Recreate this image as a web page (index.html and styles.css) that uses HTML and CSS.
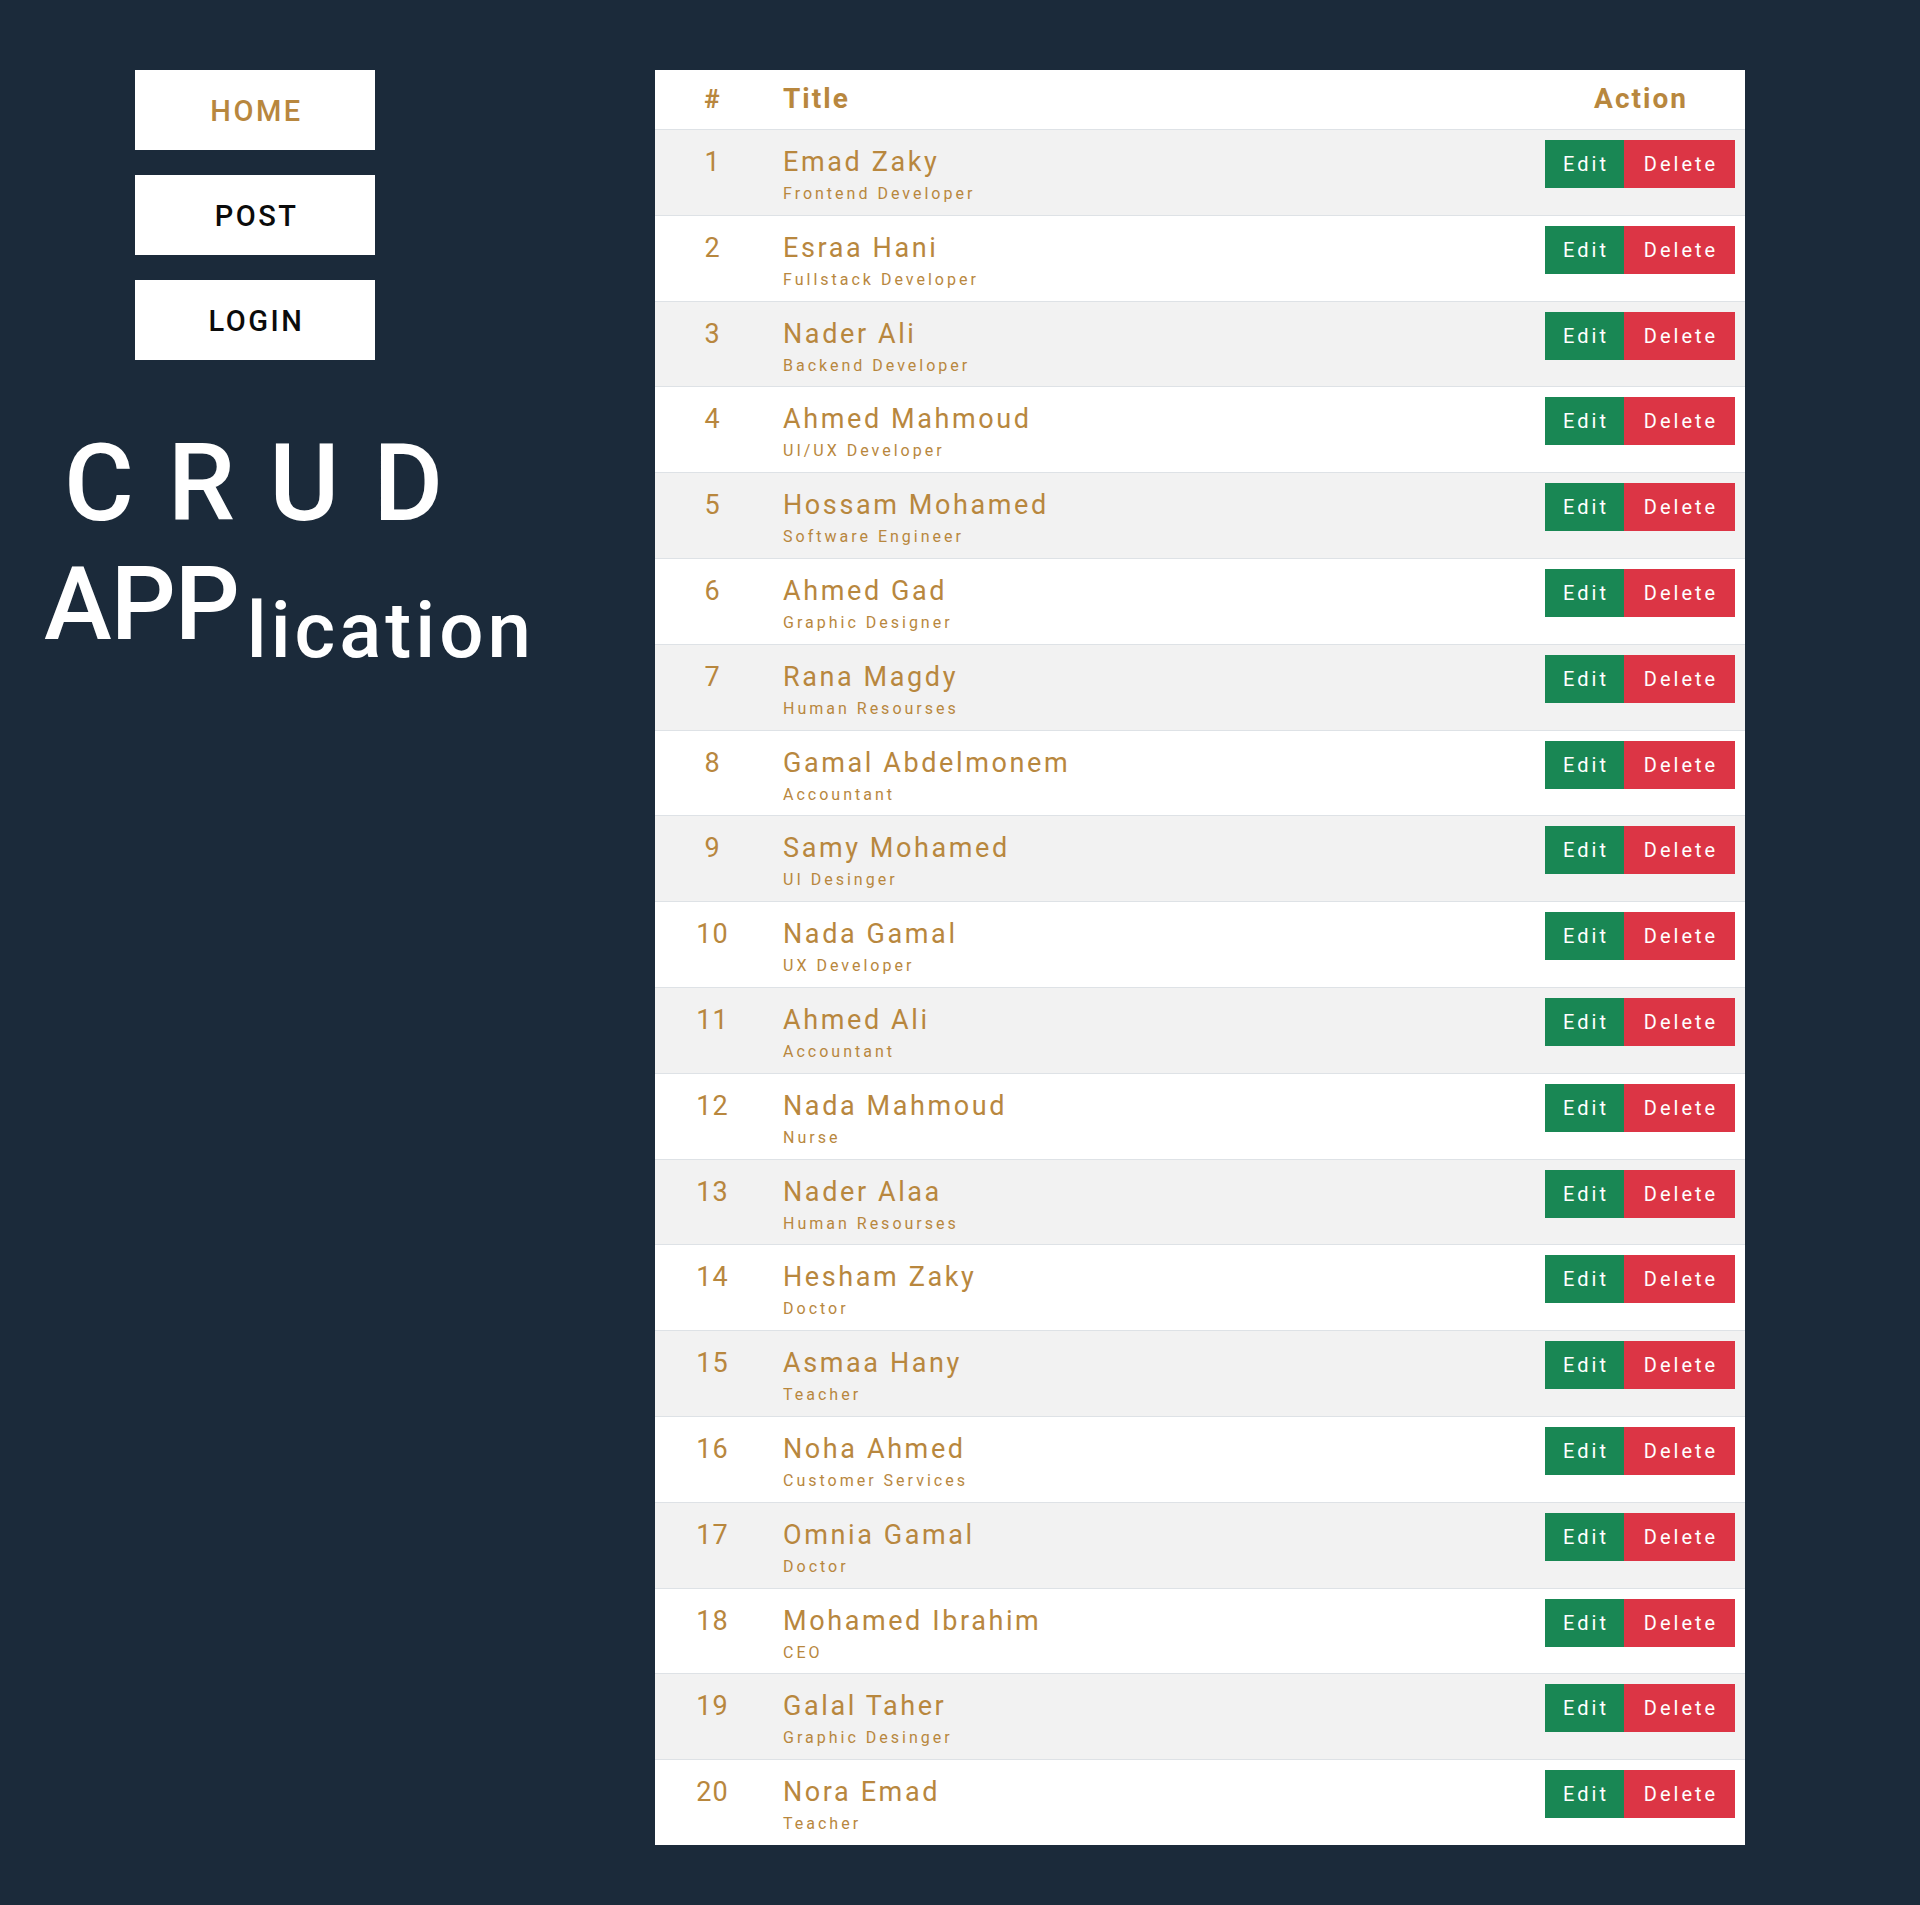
FILE: index.html
```html
<!DOCTYPE html>
<html lang="en">
<head>
<meta charset="utf-8">
<title>CRUD Application</title>
<link rel="stylesheet" href="styles.css">
</head>
<body>
<div class="page">
  <aside class="side">
    <nav class="nav">
      <a class="nav-btn active" href="#">HOME</a>
      <a class="nav-btn" href="#">POST</a>
      <a class="nav-btn" href="#">LOGIN</a>
    </nav>
    <h1 class="brand">
      <span class="brand-crud">CRUD</span>
      <span class="brand-app">APP<span class="brand-sub">lication</span></span>
    </h1>
  </aside>
  <main class="table">
    <div class="row head">
      <div class="c-num">#</div>
      <div class="c-title">Title</div>
      <div class="c-act">Action</div>
    </div>
    <div class="row odd"><div class="c-num">1</div><div class="c-title"><div class="name">Emad Zaky</div><div class="job">Frontend Developer</div></div><div class="c-act"><span class="btn edit">Edit</span><span class="btn del">Delete</span></div></div>
    <div class="row"><div class="c-num">2</div><div class="c-title"><div class="name">Esraa Hani</div><div class="job">Fullstack Developer</div></div><div class="c-act"><span class="btn edit">Edit</span><span class="btn del">Delete</span></div></div>
    <div class="row odd"><div class="c-num">3</div><div class="c-title"><div class="name">Nader Ali</div><div class="job">Backend Developer</div></div><div class="c-act"><span class="btn edit">Edit</span><span class="btn del">Delete</span></div></div>
    <div class="row"><div class="c-num">4</div><div class="c-title"><div class="name">Ahmed Mahmoud</div><div class="job">UI/UX Developer</div></div><div class="c-act"><span class="btn edit">Edit</span><span class="btn del">Delete</span></div></div>
    <div class="row odd"><div class="c-num">5</div><div class="c-title"><div class="name">Hossam Mohamed</div><div class="job">Software Engineer</div></div><div class="c-act"><span class="btn edit">Edit</span><span class="btn del">Delete</span></div></div>
    <div class="row"><div class="c-num">6</div><div class="c-title"><div class="name">Ahmed Gad</div><div class="job">Graphic Designer</div></div><div class="c-act"><span class="btn edit">Edit</span><span class="btn del">Delete</span></div></div>
    <div class="row odd"><div class="c-num">7</div><div class="c-title"><div class="name">Rana Magdy</div><div class="job">Human Resourses</div></div><div class="c-act"><span class="btn edit">Edit</span><span class="btn del">Delete</span></div></div>
    <div class="row"><div class="c-num">8</div><div class="c-title"><div class="name">Gamal Abdelmonem</div><div class="job">Accountant</div></div><div class="c-act"><span class="btn edit">Edit</span><span class="btn del">Delete</span></div></div>
    <div class="row odd"><div class="c-num">9</div><div class="c-title"><div class="name">Samy Mohamed</div><div class="job">UI Desinger</div></div><div class="c-act"><span class="btn edit">Edit</span><span class="btn del">Delete</span></div></div>
    <div class="row"><div class="c-num">10</div><div class="c-title"><div class="name">Nada Gamal</div><div class="job">UX Developer</div></div><div class="c-act"><span class="btn edit">Edit</span><span class="btn del">Delete</span></div></div>
    <div class="row odd"><div class="c-num">11</div><div class="c-title"><div class="name">Ahmed Ali</div><div class="job">Accountant</div></div><div class="c-act"><span class="btn edit">Edit</span><span class="btn del">Delete</span></div></div>
    <div class="row"><div class="c-num">12</div><div class="c-title"><div class="name">Nada Mahmoud</div><div class="job">Nurse</div></div><div class="c-act"><span class="btn edit">Edit</span><span class="btn del">Delete</span></div></div>
    <div class="row odd"><div class="c-num">13</div><div class="c-title"><div class="name">Nader Alaa</div><div class="job">Human Resourses</div></div><div class="c-act"><span class="btn edit">Edit</span><span class="btn del">Delete</span></div></div>
    <div class="row"><div class="c-num">14</div><div class="c-title"><div class="name">Hesham Zaky</div><div class="job">Doctor</div></div><div class="c-act"><span class="btn edit">Edit</span><span class="btn del">Delete</span></div></div>
    <div class="row odd"><div class="c-num">15</div><div class="c-title"><div class="name">Asmaa Hany</div><div class="job">Teacher</div></div><div class="c-act"><span class="btn edit">Edit</span><span class="btn del">Delete</span></div></div>
    <div class="row"><div class="c-num">16</div><div class="c-title"><div class="name">Noha Ahmed</div><div class="job">Customer Services</div></div><div class="c-act"><span class="btn edit">Edit</span><span class="btn del">Delete</span></div></div>
    <div class="row odd"><div class="c-num">17</div><div class="c-title"><div class="name">Omnia Gamal</div><div class="job">Doctor</div></div><div class="c-act"><span class="btn edit">Edit</span><span class="btn del">Delete</span></div></div>
    <div class="row"><div class="c-num">18</div><div class="c-title"><div class="name">Mohamed Ibrahim</div><div class="job">CEO</div></div><div class="c-act"><span class="btn edit">Edit</span><span class="btn del">Delete</span></div></div>
    <div class="row odd"><div class="c-num">19</div><div class="c-title"><div class="name">Galal Taher</div><div class="job">Graphic Desinger</div></div><div class="c-act"><span class="btn edit">Edit</span><span class="btn del">Delete</span></div></div>
    <div class="row last"><div class="c-num">20</div><div class="c-title"><div class="name">Nora Emad</div><div class="job">Teacher</div></div><div class="c-act"><span class="btn edit">Edit</span><span class="btn del">Delete</span></div></div>
  </main>
</div>
</body>
</html>
```
FILE: styles.css
```css
* { box-sizing: border-box; }

html, body {
  margin: 0;
  padding: 0;
  background: #1b2a3a;
}

body {
  font-family: Roboto, "Liberation Sans", sans-serif;
  min-height: 1905px;
}

.page {
  display: flex;
  align-items: flex-start;
  padding-top: 70px;
}

.side {
  flex: 0 0 655px;
  width: 655px;
}

.nav {
  display: flex;
  flex-direction: column;
  gap: 25px;
  padding-left: 135px;
}

.nav-btn {
  display: block;
  width: 240px;
  height: 80px;
  background: #ffffff;
  color: #0b0b0b;
  text-decoration: none;
  text-align: center;
  font-size: 29px;
  font-weight: 500;
  letter-spacing: 2.5px;
  line-height: 80px;
  padding: 1px 0 0 3px;
}

.nav-btn.active {
  color: #b8873e;
}

.brand {
  margin: 70px 0 0 0;
  color: #ffffff;
  font-weight: 500;
}

.brand-crud {
  display: block;
  font-size: 107px;
  line-height: 107px;
  letter-spacing: 34px;
  padding-left: 64px;
}

.brand-app {
  display: block;
  margin-top: 16px;
  font-size: 102px;
  line-height: 102px;
  letter-spacing: -1px;
  padding-left: 44px;
}

.brand-sub {
  font-size: 78px;
  line-height: 78px;
  letter-spacing: 4px;
  vertical-align: -18px;
  margin-left: 8px;
}

.table {
  width: 1090px;
  background: #ffffff;
  color: #b8873e;
}

.row {
  display: grid;
  grid-template-columns: 115px 1fr 190px;
  align-items: start;
  height: 85.8px;
  padding: 10px 10px 0 0;
  border-bottom: 1px solid #dee2e6;
  background: #ffffff;
}

.row.odd { background: #f2f2f2; }
.row.last { border-bottom: none; height: 84.8px; }

.row.head {
  height: 60px;
  padding-top: 12px;
  font-size: 28px;
  font-weight: 700;
  line-height: 34px;
  letter-spacing: 2px;
}

.row.head .c-num { font-size: 26px; line-height: 34px; }
.row.head .c-act { justify-content: center; padding-left: 2px; }

.c-num {
  text-align: center;
  font-size: 27px;
  line-height: 44px;
  letter-spacing: 1px;
}

.c-title {
  padding-left: 13px;
}

.name {
  font-size: 27px;
  line-height: 44px;
  letter-spacing: 2.6px;
}

.job {
  font-size: 16px;
  line-height: 19px;
  letter-spacing: 3px;
}

.c-act {
  display: flex;
}

.btn {
  display: block;
  height: 48px;
  line-height: 48px;
  text-align: center;
  color: #ffffff;
  font-size: 20px;
  letter-spacing: 3px;
  padding-left: 3px;
}

.btn.edit { width: 79px; background: #198754; }
.btn.del { width: 111px; background: #dc3545; }
```
